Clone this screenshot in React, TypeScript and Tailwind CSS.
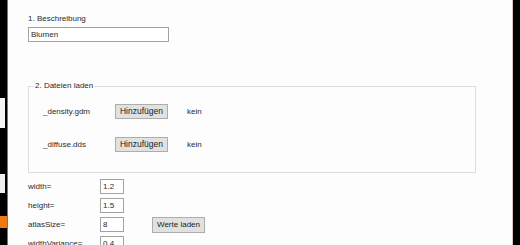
// Windows-Forms style dialog: "Beschreibung" + file loading + atlas values

const rowLabel = 'text-[#2b2b2b]';
const textBox =
  'h-[15px] border border-[#a3a3a3] bg-white pl-[2px] leading-[13px] text-[#2b2b2b]';
const winButton =
  'flex items-center justify-center border border-[#adadad] bg-[#e1e1e1] text-[#222]';

const files = ['_density.gdm', '_diffuse.dds'];

const values = [
  { label: 'width=', value: '1.2' },
  { label: 'height=', value: '1.5' },
  { label: 'atlasSize=', value: '8' },
  { label: 'widthVariance=', value: '0.4' },
];

function LeftEdge() {
  // dark desktop behind the window, with a couple of shapes peeking out
  return (
    <div className="flex w-[7px] flex-col bg-black">
      <div className="h-[98px]" />
      <div className="flex h-[30px]">
        <div className="w-[5px] bg-[#f4f4f4]" />
      </div>
      <div className="h-[46px] rounded-tl-[3px]" />
      <div className="h-[19px] w-[5px] bg-[#eeeeee]" />
      <div className="h-[23px]" />
      <div className="h-[12px] bg-[#f07a12]" />
      <div className="flex-1" />
    </div>
  );
}

export default function App() {
  return (
    <div
      className="flex h-[245px] w-[520px] overflow-hidden bg-black"
      style={{ fontFamily: '"Liberation Sans", Arial, sans-serif' }}
    >
      <LeftEdge />
      <div className="w-px bg-[#b05a62]" />

      <main className="flex flex-1 flex-col bg-[#fdfdfd] pl-[20px] pt-[14px] text-[8px]">
        {/* 1. Beschreibung */}
        <div className={`leading-[10px] ${rowLabel}`}>1. Beschreibung</div>
        <div className={`mt-[3px] w-[141px] ${textBox}`}>Blumen</div>

        {/* 2. Dateien laden */}
        <div className="relative mt-[44px] h-[87px] w-[448px] shrink-0 border border-[#dcdcdc] pl-[14px] pt-[17px]">
          <span className={`absolute -top-[6px] left-[5px] bg-[#fdfdfd] px-[1px] leading-[10px] ${rowLabel}`}>
            2. Dateien laden
          </span>
          <div className="flex flex-col gap-[18px]">
            {files.map(f => (
              <div key={f} className="flex h-[15px] items-center">
                <span className={`w-[72px] ${rowLabel}`}>{f}</span>
                <button className={`h-[15px] w-[53px] text-[8.5px] ${winButton}`}>Hinzufügen</button>
                <span className={`ml-[19px] ${rowLabel}`}>kein</span>
              </div>
            ))}
          </div>
        </div>

        {/* values */}
        <div className="mt-[6px] grid grid-cols-[72px_24px_auto] grid-rows-[15px_15px_15px_15px] gap-y-[4px]">
          {values.map((v, i) => (
            <div key={v.label} className="contents">
              <span className={`self-center ${rowLabel}`}>{v.label}</span>
              <div className={textBox}>{v.value}</div>
              {i === 2 ? (
                <button className={`ml-[28px] h-[16px] w-[53px] self-center ${winButton}`}>
                  Werte laden
                </button>
              ) : (
                <span />
              )}
            </div>
          ))}
        </div>
      </main>

      <div className="w-px bg-[#dcc4c4]" />
      <div className="w-[7px] bg-black" />
    </div>
  );
}
